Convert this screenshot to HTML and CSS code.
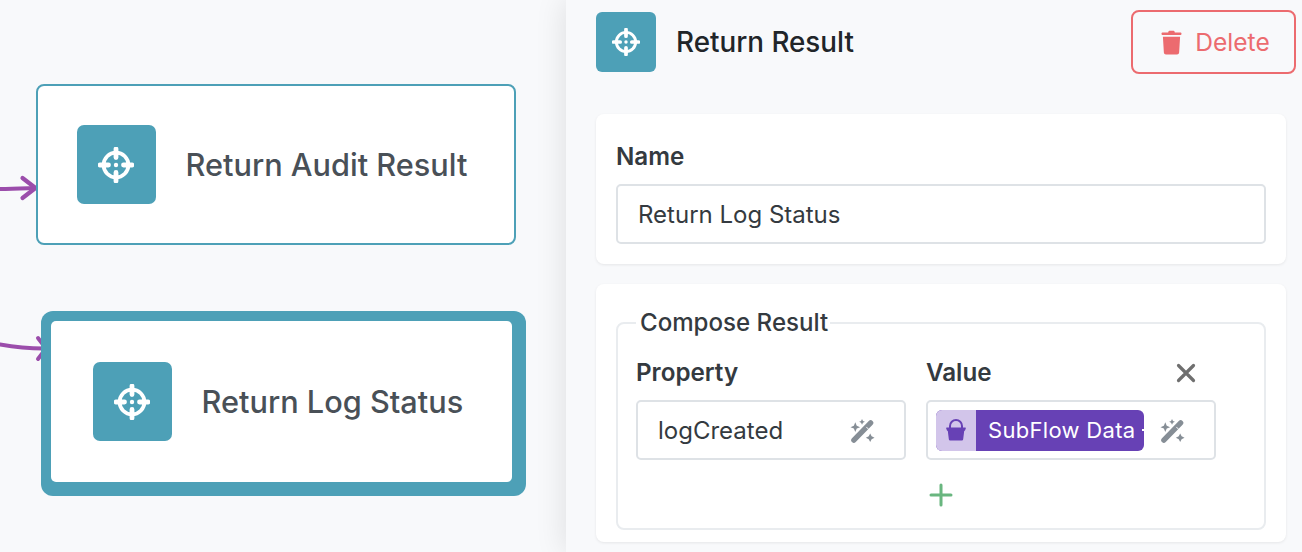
FILE: index.html
```html
<!DOCTYPE html>
<html lang="en">
<head>
<meta charset="utf-8">
<title>Return Result</title>
<link rel="stylesheet" href="styles.css">
</head>
<body>
<svg class="sprite" width="0" height="0" aria-hidden="true">
  <symbol id="crosshair" viewBox="0 0 36 36">
    <circle cx="18" cy="18" r="12.400" fill="none" stroke="currentColor" stroke-width="3.800"/>
    <path d="M18 2V10.500M18 25.500V34M2 18H10.500M25.500 18H34" fill="none" stroke="currentColor" stroke-width="4.800" stroke-linecap="round"/>
    <circle cx="18" cy="18" r="2.200" fill="currentColor"/>
  </symbol>
  <symbol id="wand" viewBox="0 0 26 26">
    <path d="M4 23 21.500 5" fill="none" stroke="currentColor" stroke-width="5.500" stroke-linecap="round"/>
    <path d="M17 9.300 21 13.500" stroke="#fff" stroke-width="1"/>
    <path d="M5.500 4.500 7 8 10.500 9.500 7 11 5.500 14.500 4 11 .5 9.500 4 8ZM12.500 1 13.500 3 15.500 4 13.500 5 12.500 7 11.500 5 9.500 4 11.500 3ZM21 16 22.500 19 25.500 20.500 22.500 22 21 25 19.500 22 16.500 20.500 19.500 19Z" fill="currentColor"/>
  </symbol>
</svg>
<main class="app">
  <section class="canvas">
    <svg class="edges" width="566" height="552" aria-hidden="true">
      <path d="M0 189C12 189 22 188.500 35 188" fill="none" stroke="#9b4dab" stroke-width="4.200" stroke-linecap="round"/>
      <path d="M22.500 178 35.500 188 22.500 198" fill="none" stroke="#9b4dab" stroke-width="4.200" stroke-linecap="round" stroke-linejoin="round"/>
      <path d="M0 344.500C14 347 28 348.500 44 348.500" fill="none" stroke="#9b4dab" stroke-width="4" stroke-linecap="round"/>
      <path d="M38 338 46 348.500 38 359" fill="none" stroke="#9b4dab" stroke-width="4" stroke-linecap="round" stroke-linejoin="round"/>
    </svg>
    <div class="node node-audit">
      <span class="tile tile-node"><svg class="target-node"><use href="#crosshair"/></svg></span>
      <span class="node-name">Return Audit Result</span>
    </div>
    <div class="node node-log">
      <div class="node-inner">
        <span class="tile tile-node"><svg class="target-node"><use href="#crosshair"/></svg></span>
        <span class="node-name">Return Log Status</span>
      </div>
    </div>
  </section>
  <aside class="panel">
    <header class="panel-head">
      <div class="panel-title">
        <span class="tile tile-head"><svg class="target-head"><use href="#crosshair"/></svg></span>
        <h1>Return Result</h1>
      </div>
      <button class="delete" type="button">
        <svg class="trash" viewBox="0 0 22 26" aria-hidden="true">
          <path d="M7.500 2.500C7.800 1.200 8.500.8 9.500.8h3c1 0 1.700.4 2 1.700h5.500c1 0 1.500.5 1.500 1.300S21 5.200 20 5.200H2C1 5.200.5 4.600.5 3.800S1 2.500 2 2.500ZM2 7h18l-1 16.500c-.1 1.300-1 2-2.200 2H5.200c-1.200 0-2.100-.7-2.200-2Z" fill="currentColor"/>
        </svg>
        Delete
      </button>
    </header>
    <div class="card card-name">
      <label class="label">Name</label>
      <div class="input input-name">Return Log Status</div>
    </div>
    <div class="card card-compose">
      <fieldset class="compose">
        <legend>Compose Result</legend>
        <div class="compose-grid">
          <div class="col col-prop">
            <span class="label">Property</span>
            <div class="input input-row">
              <span>logCreated</span>
              <svg class="wand"><use href="#wand"/></svg>
            </div>
          </div>
          <div class="col col-value">
            <div class="value-head">
              <span class="label">Value</span>
              <svg class="close" viewBox="0 0 20 20" aria-hidden="true"><path d="M2.500 2.500 17.500 17.500M17.500 2.500 2.500 17.500" stroke="currentColor" stroke-width="3.200" stroke-linecap="round"/></svg>
            </div>
            <div class="input input-value">
              <span class="pill">
                <span class="pill-icon">
                  <svg class="bucket" viewBox="0 0 20 22" aria-hidden="true">
                    <path d="M4 9V7a6 6 0 0 1 12 0v2" fill="none" stroke="currentColor" stroke-width="2"/>
                    <path d="M1 8.500h18c.6 0 1 .5.800 1.100l-.8 2c-.2.300-.4.400-.8.400l-1 8c-.1 1-.8 1.500-1.700 1.500H4.500c-.9 0-1.600-.5-1.700-1.500l-1-8c-.4 0-.6-.1-.8-.4l-.8-2C0 9 .4 8.500 1 8.500Z" fill="currentColor"/>
                  </svg>
                </span>
                <span class="pill-text">SubFlow Data</span>
              </span>
              <svg class="wand"><use href="#wand"/></svg>
            </div>
            <svg class="plus" viewBox="0 0 24 24" aria-hidden="true"><path d="M12 2V22M2 12H22" stroke="currentColor" stroke-width="3" stroke-linecap="round"/></svg>
          </div>
        </div>
      </fieldset>
    </div>
  </aside>
</main>
</body>
</html>
```
FILE: styles.css
```css
* { box-sizing: border-box; }
html, body { margin: 0; height: 552px; overflow: hidden; }
body { font-family: Inter, "Liberation Sans", sans-serif; background: #f8f9fb; color: #212529; }
.sprite { position: absolute; }
.app { display: flex; width: 1302px; height: 552px; overflow: hidden; }
.canvas { position: relative; width: 566px; flex: none; }
.edges { position: absolute; left: 0; top: 0; }
.node { position: absolute; display: flex; align-items: center; background: #fff; }
.node-audit { left: 36px; top: 84px; width: 480px; height: 161px; border: 2px solid #4da0b7; border-radius: 8px; padding-left: 39px; gap: 30px; }
.node-log { left: 41px; top: 311px; width: 485px; height: 185px; padding: 10px 14px 14px 10px; border-radius: 12px; background: #4da0b7; }
.node-inner { display: flex; align-items: center; gap: 30px; width: 100%; height: 100%; padding-left: 42px; border-radius: 5px; background: #fff; }
.tile { display: flex; align-items: center; justify-content: center; background: #4da0b7; color: #fff; flex: none; }
.tile-node { width: 78.500px; height: 78.500px; border-radius: 7px; }
.target-node { width: 36px; height: 36px; }
.tile-head { width: 60px; height: 60px; border-radius: 6px; }
.target-head { width: 28px; height: 28px; }
.node-name { font-size: 30.700px; font-weight: 500; color: #495057; white-space: nowrap; }
.panel { position: relative; width: 736px; height: 552px; flex: none; padding: 10px 6px 0 30px; background: #f8f9fb; box-shadow: -2px 0 28px rgba(0, 0, 0, .1); }
.panel-head { display: flex; justify-content: space-between; align-items: flex-start; height: 64px; margin-bottom: 40px; }
.panel-title { display: flex; align-items: center; gap: 20px; padding-top: 2px; }
h1 { margin: 0; font-size: 27.800px; font-weight: 500; color: #212529; }
.delete { display: flex; align-items: center; justify-content: center; gap: 13px; width: 165px; height: 64px; padding: 0 0 0 4px; border: 2px solid #ec6b6f; border-radius: 8px; background: transparent; color: #ec6b6f; font: 400 24.600px Inter, "Liberation Sans", sans-serif; }
.trash { width: 21px; height: 25px; }
.card { width: 690px; background: #fff; border-radius: 8px; box-shadow: 0 1px 3px rgba(0, 0, 0, .08); }
.card-name { height: 150px; padding: 29px 20px 0; margin-bottom: 20px; }
.card-compose { height: 258px; padding: 25px 20px 0; }
.label { display: block; font-size: 24.200px; font-weight: 600; color: #343a40; line-height: 28px; }
.input { display: flex; align-items: center; border: 2px solid #dee2e6; border-radius: 5px; background: #fff; font-size: 24px; color: #343a40; }
.input-name { height: 60px; margin-top: 13px; padding-left: 20px; }
.compose { height: 221px; margin: 0; padding: 0 18px; border: 2px solid #e9ecef; border-radius: 8px; min-width: 0; }
.compose legend { margin-left: 0; padding: 0 2px 0 4px; font-size: 24.100px; font-weight: 500; color: #343a40; line-height: 28px; }
.compose-grid { display: flex; gap: 20px; padding-top: 22px; }
.col-prop { width: 270px; }
.col-value { width: 290px; }
.value-head { display: flex; align-items: center; justify-content: space-between; padding-right: 20px; }
.close { width: 20px; height: 20px; color: #6f6f6f; }
.input-row, .input-value { height: 60px; margin-top: 13px; justify-content: space-between; }
.input-row { padding: 0 29px 0 20px; }
.input-value { padding: 0 29px 0 8px; }
.wand { width: 25px; height: 25px; color: #868e96; }
.pill { display: flex; width: 208px; height: 41px; border-radius: 6px; overflow: hidden; background: #6741b5; font-size: 22px; color: #fff; }
.pill::after { content: ""; width: 2px; height: 2px; margin-left: auto; align-self: center; background: #fff; }
.pill-icon { display: flex; align-items: center; justify-content: center; width: 40px; flex: none; background: #d2c5ea; color: #6741b5; }
.bucket { width: 20px; height: 22px; }
.pill-text { padding-left: 12px; line-height: 41px; white-space: nowrap; letter-spacing: .3px; }
.plus { display: block; width: 24px; height: 24px; margin: 23px 0 0 3px; color: #69b67f; }
```
